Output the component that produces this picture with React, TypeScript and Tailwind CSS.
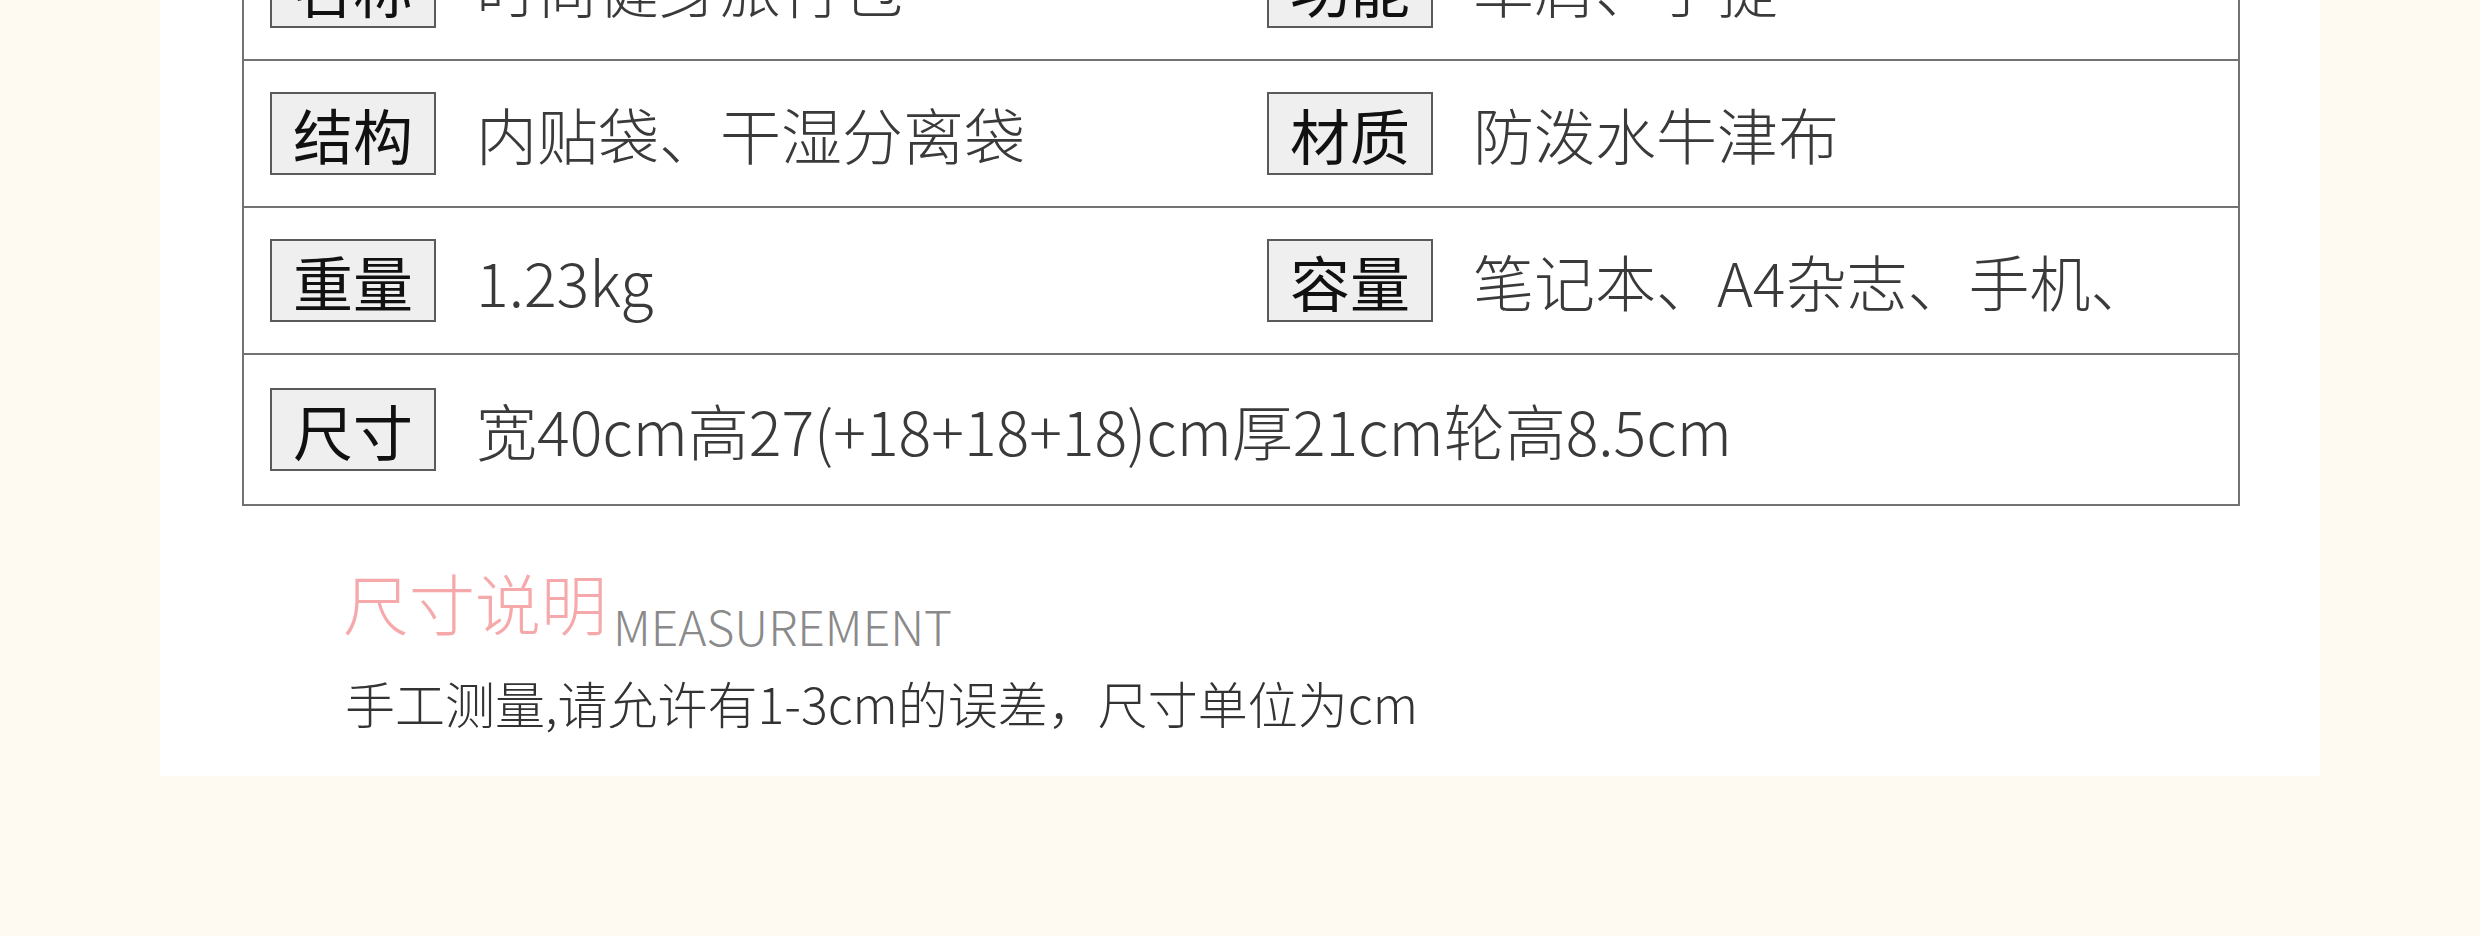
import React from "react";

const FONT = { fontFamily: '"Noto Sans CJK SC", "Noto Sans", sans-serif' };

function Label({ text }: { text: string }) {
  return (
    <div className="flex h-[83px] w-[166px] shrink-0 items-center justify-center border-2 border-[#5a5a5a] bg-[#efefef] text-[60px] leading-none text-[#111]">
      {text}
    </div>
  );
}

function Cell({ label, value }: { label: string; value: string }) {
  return (
    <div className="flex items-center pl-[26px]">
      <Label text={label} />
      <span className="ml-[40px] whitespace-nowrap text-[61px] font-light leading-none text-[#3a3a3a]">{value}</span>
    </div>
  );
}

export default function App() {
  const rows: [string, string, string?, string?][] = [
    ["名称", "时尚健身旅行包", "功能", "单肩、手提"],
    ["结构", "内贴袋、干湿分离袋", "材质", "防泼水牛津布"],
    ["重量", "1.23kg", "容量", "笔记本、A4杂志、手机、"],
    ["尺寸", "宽40cm高27(+18+18+18)cm厚21cm轮高8.5cm"],
  ];
  return (
    <div className="h-[936px] w-[2480px] overflow-hidden bg-[#fffaf1]" style={FONT}>
      <div className="ml-[160px] h-[776px] w-[2160px] overflow-hidden bg-white">
        <div className="ml-[82px] mt-[-86px] w-[1998px] border-x-2 border-b-2 border-[#727272]">
          {rows.map((r, i) => (
            <div
              key={i}
              className={
                "grid h-[147px] grid-cols-2 items-center " +
                (i < rows.length - 1 ? "border-b-2 border-[#727272]" : "h-[149px]")
              }
            >
              <Cell label={r[0]} value={r[1]} />
              {r[2] ? <Cell label={r[2]} value={r[3] as string} /> : <div />}
            </div>
          ))}
        </div>
        <div className="ml-[183px] mt-[62px] flex items-end">
          <span className="text-[66px] font-light leading-none text-[#f6a9ab]">尺寸说明</span>
          <span className="mb-[-15px] ml-[6px] text-[48px] font-light leading-none text-[#8a8a8a]">MEASUREMENT</span>
        </div>
        <div className="ml-[185px] mt-[43px] text-[50px] font-light leading-none text-[#333]">
          手工测量,请允许有1-3cm的误差，尺寸单位为cm
        </div>
      </div>
    </div>
  );
}
